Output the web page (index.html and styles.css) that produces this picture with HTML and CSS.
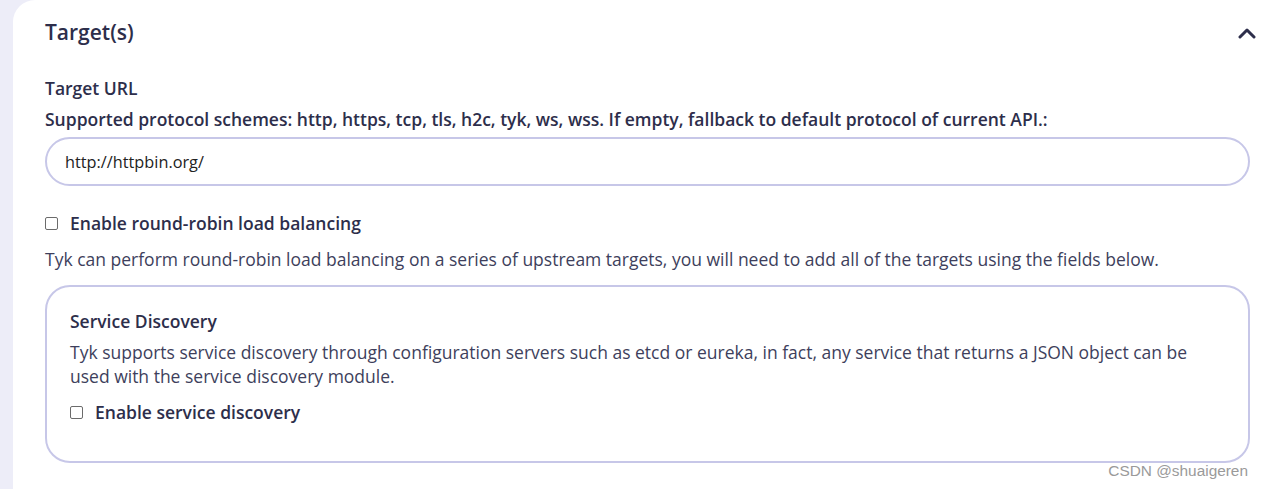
FILE: index.html
```html
<!DOCTYPE html>
<html>
<head>
<meta charset="utf-8">
<link rel="stylesheet" href="styles.css">
</head>
<body>
<div class="page">
  <section class="card">
    <header class="card-header">
      <h2 class="card-title">Target(s)</h2>
      <svg class="chevron" width="18" height="12" viewBox="0 0 18 12"><path d="M2 10 L9 3 L16 10" fill="none" stroke="#2d2e4b" stroke-width="3" stroke-linecap="round" stroke-linejoin="round"/></svg>
    </header>
    <div class="field">
      <div class="field-label">Target URL</div>
      <div class="field-label">Supported protocol schemes: http, https, tcp, tls, h2c, tyk, ws, wss. If empty, fallback to default protocol of current API.:</div>
      <div class="input">http://httpbin.org/</div>
    </div>
    <label class="check check--main">
      <span class="box"></span>
      <span class="check-label">Enable round-robin load balancing</span>
    </label>
    <p class="help">Tyk can perform round-robin load balancing on a series of upstream targets, you will need to add all of the targets using the fields below.</p>
    <div class="panel">
      <div class="panel-title">Service Discovery</div>
      <p class="panel-text">Tyk supports service discovery through configuration servers such as etcd or eureka, in fact, any service that returns a JSON object can be used with the service discovery module.</p>
      <label class="check check--panel">
        <span class="box"></span>
        <span class="check-label">Enable service discovery</span>
      </label>
    </div>
  </section>
  <div class="watermark">CSDN @shuaigeren</div>
</div>
</body>
</html>
```
FILE: styles.css
```css
html, body {
  margin: 0;
  padding: 0;
  background: #ededf8;
}
body {
  font-family: "Open Sans", sans-serif;
  color: #2d2e4b;
  width: 1262px;
  height: 489px;
  overflow: hidden;
}
.page {
  position: relative;
  height: 489px;
}
.card {
  margin-left: 13px;
  background: #fff;
  border-top-left-radius: 22px;
  height: 489px;
  padding: 0 12px 0 32px;
  box-sizing: border-box;
}
.card-header {
  display: flex;
  align-items: center;
  justify-content: space-between;
  height: 64px;
}
.card-title {
  margin: 0;
  font-size: 21px;
  font-weight: 600;
  line-height: 1;
}
.chevron {
  margin-right: -6px;
  margin-top: 2px;
}
.field {
  padding-top: 9px;
}
.field-label {
  font-size: 17.5px;
  font-weight: 600;
  line-height: 31px;
}
.input {
  margin-top: 2px;
  height: 49px;
  box-sizing: border-box;
  border: 2px solid #c7c7e8;
  border-radius: 25px;
  padding: 0 18px;
  display: flex;
  align-items: center;
  font-size: 16.3px;
  color: #222;
}
.check {
  display: flex;
  align-items: center;
  gap: 12px;
  height: 26px;
}
.check--main {
  margin-top: 24px;
}
.box {
  width: 11px;
  height: 11px;
  border: 1px solid #6b6b6b;
  border-radius: 2px;
  background: #fff;
  flex: none;
}
.check-label {
  font-size: 17.5px;
  font-weight: 600;
}
.help {
  margin: 11px 0 0 0;
  font-size: 17.5px;
  line-height: 24px;
  color: #3e3f5c;
}
.panel {
  margin-top: 14px;
  height: 178px;
  box-sizing: border-box;
  border: 2px solid #c7c7e8;
  border-radius: 25px;
  padding: 22px 24px 0 23px;
}
.panel-title {
  font-size: 17.5px;
  font-weight: 600;
  line-height: 24px;
}
.panel-text {
  margin: 7px 0 0 0;
  font-size: 17.5px;
  line-height: 24px;
  color: #3e3f5c;
}
.check--panel {
  margin-top: 11px;
}
.watermark {
  position: absolute;
  right: 14px;
  bottom: 9px;
  font-family: "Liberation Sans", sans-serif;
  font-size: 15.4px;
  color: #9a9a9a;
}
```
